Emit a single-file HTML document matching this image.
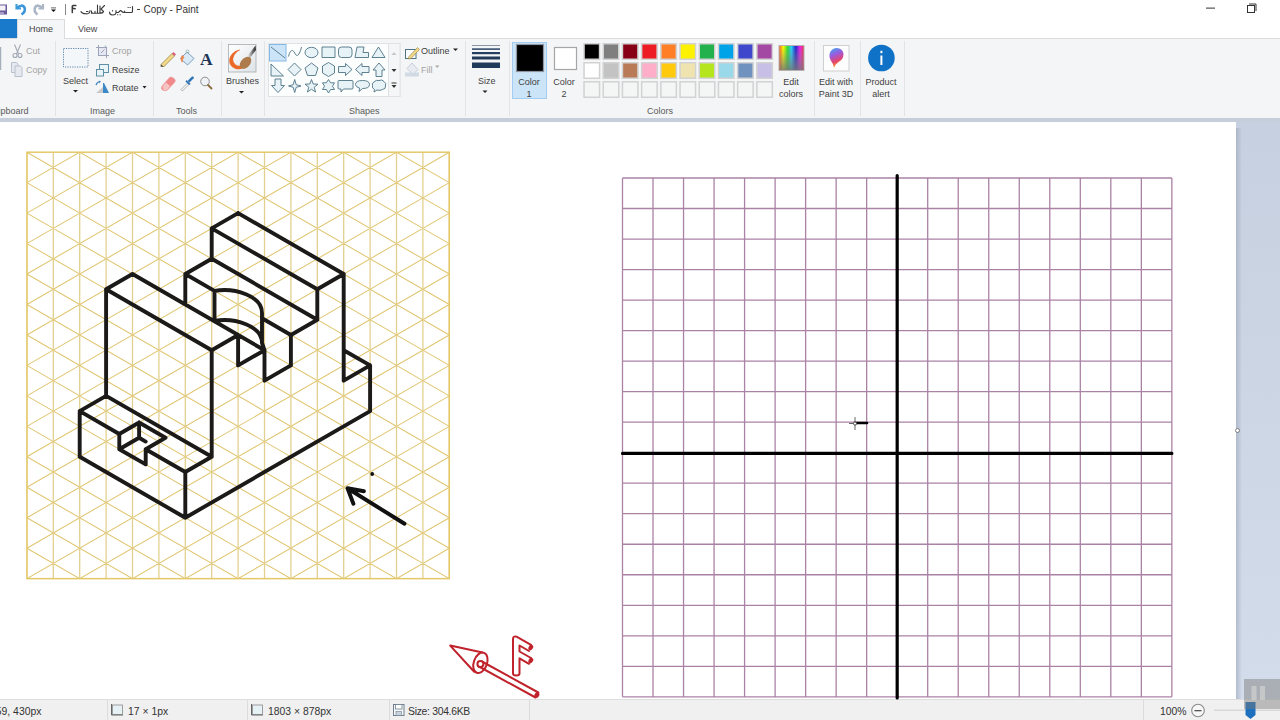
<!DOCTYPE html>
<html><head><meta charset="utf-8">
<style>
*{margin:0;padding:0;box-sizing:border-box}
html,body{width:1280px;height:720px;overflow:hidden;background:#fff;font-family:"Liberation Sans",sans-serif;color:#444}
.a{position:absolute}
.t{position:absolute;font-size:9px;line-height:10px;white-space:nowrap;color:#3f3f3f}
.c{text-align:center}
.g{color:#a3a3a3}
.sep{position:absolute;top:41px;width:1px;height:75px;background:#e3e4e5}
.st{position:absolute;top:706px;font-size:10.4px;line-height:11px;white-space:nowrap;color:#333}
svg{position:absolute;left:0;top:0}
</style></head><body>
<!-- title bar -->
<div class="a" style="left:0;top:0;width:1280px;height:19px;background:#fff"></div>
<!-- tabs row -->
<div class="a" style="left:0;top:19px;width:17px;height:19px;background:#1979ca"></div>
<div class="a" style="left:17px;top:19px;width:48px;height:20px;background:#f5f6f7;border:1px solid #dadbdc;border-bottom:none"></div>
<div class="t" style="left:29px;top:24px;color:#444">Home</div>
<div class="t" style="left:78px;top:24px;color:#444">View</div>
<!-- ribbon -->
<div class="a" style="left:0;top:38px;width:1280px;height:1px;background:#dadbdc"></div>
<div class="a" style="left:0;top:39px;width:1280px;height:79px;background:#f4f5f6"></div>
<div class="a" style="left:17px;top:38px;width:47px;height:2px;background:#f5f6f7"></div>
<div class="a" style="left:0;top:118px;width:1280px;height:4px;background:#c6cedb"></div>
<!-- workspace -->
<div class="a" style="left:0;top:122px;width:1280px;height:577px;background:linear-gradient(180deg,#c6d0e0,#d3dcea)"></div>
<div class="a" style="left:1236px;top:128px;width:6px;height:571px;background:linear-gradient(90deg,rgba(150,162,180,.55),rgba(150,162,180,0))"></div>
<div class="a" style="left:0;top:122px;width:1236px;height:577px;background:#fff"></div>
<!-- status bar -->
<div class="a" style="left:0;top:699px;width:1280px;height:21px;background:#f0f0f0;border-top:1px solid #dedede"></div>
<svg width="1280" height="720" viewBox="0 0 1280 720">
<defs><clipPath id="ic"><rect x="26.90" y="152.20" width="422.40" height="426.44"/></clipPath></defs>
<g clip-path="url(#ic)"><path d="M26.90 -91.48L449.30 152.20M26.90 -61.02L449.30 182.66M26.90 -30.56L449.30 213.12M26.90 -0.10L449.30 243.58M26.90 30.36L449.30 274.04M26.90 60.82L449.30 304.50M26.90 91.28L449.30 334.96M26.90 121.74L449.30 365.42M26.90 152.20L449.30 395.88M26.90 182.66L449.30 426.34M26.90 213.12L449.30 456.80M26.90 243.58L449.30 487.26M26.90 274.04L449.30 517.72M26.90 304.50L449.30 548.18M26.90 334.96L449.30 578.64M26.90 365.42L449.30 609.10M26.90 395.88L449.30 639.56M26.90 426.34L449.30 670.02M26.90 456.80L449.30 700.48M26.90 487.26L449.30 730.94M26.90 517.72L449.30 761.40M26.90 548.18L449.30 791.86M26.90 578.64L449.30 822.32M26.90 152.20L449.30 -91.48M26.90 182.66L449.30 -61.02M26.90 213.12L449.30 -30.56M26.90 243.58L449.30 -0.10M26.90 274.04L449.30 30.36M26.90 304.50L449.30 60.82M26.90 334.96L449.30 91.28M26.90 365.42L449.30 121.74M26.90 395.88L449.30 152.20M26.90 426.34L449.30 182.66M26.90 456.80L449.30 213.12M26.90 487.26L449.30 243.58M26.90 517.72L449.30 274.04M26.90 548.18L449.30 304.50M26.90 578.64L449.30 334.96M26.90 609.10L449.30 365.42M26.90 639.56L449.30 395.88M26.90 670.02L449.30 426.34M26.90 700.48L449.30 456.80M26.90 730.94L449.30 487.26M26.90 761.40L449.30 517.72M26.90 791.86L449.30 548.18M26.90 822.32L449.30 578.64" fill="none" stroke="#e0c672" stroke-width="1.05"/><path d="M26.90 152.20V578.64M53.30 152.20V578.64M79.70 152.20V578.64M106.10 152.20V578.64M132.50 152.20V578.64M158.90 152.20V578.64M185.30 152.20V578.64M211.70 152.20V578.64M238.10 152.20V578.64M264.50 152.20V578.64M290.90 152.20V578.64M317.30 152.20V578.64M343.70 152.20V578.64M370.10 152.20V578.64M396.50 152.20V578.64M422.90 152.20V578.64M449.30 152.20V578.64" fill="none" stroke="#e3d08f" stroke-width="1.3"/></g>
<rect x="26.90" y="152.20" width="422.40" height="426.44" fill="none" stroke="#e4c868" stroke-width="1.5"/>
<path d="M211.70 228.35L238.10 213.12M238.10 213.12L343.70 274.04M343.70 274.04L317.30 289.27M211.70 228.35L317.30 289.27M211.70 228.35L211.70 258.81M317.30 289.27L317.30 319.73M211.70 258.81L317.30 319.73M343.70 274.04L343.70 380.65M185.30 274.04L211.70 258.81M317.30 319.73L290.90 334.96M185.30 274.04L185.30 304.50M290.90 334.96L290.90 365.42M290.90 365.42L264.50 380.65M264.50 350.19L264.50 380.65M238.10 334.96L238.10 365.42M238.10 365.42L264.50 350.19M106.10 289.27L132.50 274.04M132.50 274.04L264.50 350.19M106.10 289.27L211.70 350.19M211.70 350.19L238.10 334.96M106.10 289.27L106.10 395.88M211.70 350.19L211.70 456.80M106.10 395.88L79.70 411.11M106.10 395.88L211.70 456.80M79.70 411.11L79.70 456.80M79.70 456.80L185.30 517.72M211.70 456.80L185.30 472.03M185.30 472.03L185.30 517.72M79.70 411.11L119.30 433.95M145.70 449.19L185.30 472.03M119.30 433.95L139.10 422.53M139.10 422.53L165.50 437.76M165.50 437.76L145.70 449.19M139.10 422.53L139.10 437.76M119.30 433.95L119.30 449.19M119.30 449.19L145.70 464.42M145.70 464.42L145.70 449.19M119.30 449.19L139.10 437.76M139.10 437.76L145.70 441.57M185.30 517.72L370.10 411.11M370.10 365.42L370.10 411.11M343.70 350.19L370.10 365.42M370.10 365.42L343.70 380.65M185.30 274.04L214.50 290.89M262.00 318.29L290.90 334.96M214.50 290.89C235.00 287.39 262.00 296.00 262.00 313.00M214.50 290.89V320.89M214.50 320.89C235.00 317.39 262.00 326.00 262.00 343.00M262.00 313.00L262.00 343.00L264.50 350.19" fill="none" stroke="#1c1a19" stroke-width="3.9" stroke-linecap="round" stroke-linejoin="round"/>
<path d="M404.5 523.75L347.8 488.5M363.9 491.25L347.5 488.2L353.4 503.75" fill="none" stroke="#111" stroke-width="3.9" stroke-linecap="round" stroke-linejoin="round"/>
<circle cx="372.2" cy="474" r="1.9" fill="#111"/>
<g fill="none" stroke="#c0232b" stroke-width="2" stroke-linejoin="round" stroke-linecap="round">
<path d="M450.2 645.6L482.5 652.6M450.2 645.6L474.2 671.7"/>
<ellipse cx="480.4" cy="662.8" rx="6.6" ry="10.6" transform="rotate(20 480.4 662.8)"/>
<path d="M478.9 666.5L535.5 697.5M481.9 661.5L538.3 692.5"/>
<circle cx="480.4" cy="664" r="3.0" fill="#fff"/>
<path d="M513 673.5V639Q513 635.8 516.5 636.6L531 644.8M529 651L519.5 645.5V651.5L531 658M529 663.8L519.5 658.3V673.5Q519.5 675.5 516.25 675.5Q513 675.5 513 673.5"/>
</g>
<ellipse cx="530.8" cy="647.5" rx="2.2" ry="3" fill="#c0232b" transform="rotate(30 530.8 647.5)"/>
<ellipse cx="530.8" cy="660.5" rx="2.2" ry="3" fill="#c0232b" transform="rotate(30 530.8 660.5)"/>
<ellipse cx="536.9" cy="695" rx="2.3" ry="3" fill="#c0232b" transform="rotate(30 536.9 695)"/>
<path d="M622.50 178.00V696.84M653.02 178.00V696.84M683.54 178.00V696.84M714.06 178.00V696.84M744.58 178.00V696.84M775.10 178.00V696.84M805.62 178.00V696.84M836.14 178.00V696.84M866.66 178.00V696.84M897.18 178.00V696.84M927.70 178.00V696.84M958.22 178.00V696.84M988.74 178.00V696.84M1019.26 178.00V696.84M1049.78 178.00V696.84M1080.30 178.00V696.84M1110.82 178.00V696.84M1141.34 178.00V696.84M1171.86 178.00V696.84M622.50 178.00H1171.86M622.50 208.52H1171.86M622.50 239.04H1171.86M622.50 269.56H1171.86M622.50 300.08H1171.86M622.50 330.60H1171.86M622.50 361.12H1171.86M622.50 391.64H1171.86M622.50 422.16H1171.86M622.50 452.68H1171.86M622.50 483.20H1171.86M622.50 513.72H1171.86M622.50 544.24H1171.86M622.50 574.76H1171.86M622.50 605.28H1171.86M622.50 635.80H1171.86M622.50 666.32H1171.86M622.50 696.84H1171.86" fill="none" stroke="#aa82a5" stroke-width="1.3"/>
<path d="M897.18 175.5V698M622.50 453.4H1171.86" fill="none" stroke="#000" stroke-width="3.2" stroke-linecap="round"/>
<path d="M849 423.5H861M855 417V430" stroke="#555" stroke-width="0.9"/>
<path d="M856 423H867" stroke="#000" stroke-width="2.6" stroke-linecap="round"/>
<circle cx="855" cy="423.5" r="1.6" fill="#fff" stroke="#333" stroke-width="0.8"/>
<circle cx="1237.5" cy="430.5" r="2" fill="#fff" stroke="#666" stroke-width="0.8"/>
</svg>
<div class="t" style="left:143.5px;top:3.5px;font-size:10px;line-height:11px;color:#333">Copy - Paint</div>
<div class="a" style="left:136.5px;top:9px;width:3.5px;height:1px;background:#444"></div>
<!-- separators -->
<div class="sep" style="left:55px"></div>
<div class="sep" style="left:153px"></div>
<div class="sep" style="left:221px"></div>
<div class="sep" style="left:264px"></div>
<div class="sep" style="left:465px"></div>
<div class="sep" style="left:509px"></div>
<div class="sep" style="left:814px"></div>
<div class="sep" style="left:860px"></div>
<div class="sep" style="left:904px"></div>
<!-- clipboard -->
<div class="t g" style="left:26px;top:46px">Cut</div>
<div class="t g" style="left:26px;top:64.5px">Copy</div>
<div class="t" style="left:-10px;top:105.5px;color:#5a5a5a">Clipboard</div>
<!-- image -->
<div class="t" style="left:63px;top:76px">Select</div>
<div class="t g" style="left:112px;top:46px">Crop</div>
<div class="t" style="left:112px;top:65px">Resize</div>
<div class="t" style="left:112px;top:82.5px">Rotate</div>
<div class="t" style="left:90px;top:105.5px;color:#5a5a5a">Image</div>
<!-- tools -->
<div class="t" style="left:176px;top:105.5px;color:#5a5a5a">Tools</div>
<div class="t" style="left:226px;top:76px">Brushes</div>
<!-- shapes -->
<div class="t" style="left:421px;top:46px">Outline</div>
<div class="t g" style="left:421px;top:64.5px">Fill</div>
<div class="t" style="left:349px;top:105.5px;color:#5a5a5a">Shapes</div>
<!-- size -->
<div class="t" style="left:478px;top:76px">Size</div>
<!-- colors -->
<div class="a" style="left:512px;top:42px;width:35px;height:57px;background:#cce4f7;border:1px solid #a3cdf0"></div>
<div class="t c" style="left:509px;top:75.5px;width:40px;line-height:12px">Color<br>1</div>
<div class="t c" style="left:544px;top:75.5px;width:40px;line-height:12px">Color<br>2</div>
<div class="t c" style="left:771px;top:75.5px;width:40px;line-height:12px">Edit<br>colors</div>
<div class="t" style="left:647px;top:105.5px;color:#5a5a5a">Colors</div>
<div class="t c" style="left:816px;top:75.5px;width:40px;line-height:12px">Edit with<br>Paint 3D</div>
<div class="t c" style="left:861px;top:75.5px;width:40px;line-height:12px">Product<br>alert</div>
<!-- status -->
<div class="st" style="left:-10px">459, 430px</div>
<div class="st" style="left:128px">17 × 1px</div>
<div class="st" style="left:268px">1803 × 878px</div>
<div class="st" style="left:408px;letter-spacing:-0.3px">Size: 304.6KB</div>
<div class="st" style="left:1160px">100%</div>
<div class="a" style="left:107px;top:700px;width:1px;height:20px;background:#dcdcdc"></div>
<div class="a" style="left:247px;top:700px;width:1px;height:20px;background:#dcdcdc"></div>
<div class="a" style="left:389px;top:700px;width:1px;height:20px;background:#dcdcdc"></div>
<div class="a" style="left:529px;top:700px;width:1px;height:20px;background:#dcdcdc"></div>
<div class="a" style="left:1143px;top:700px;width:1px;height:20px;background:#dcdcdc"></div>
<svg width="1280" height="720" viewBox="0 0 1280 720"><rect x="584.05" y="43.75" width="15.5" height="15.5" fill="#000000" stroke="#d2d2d2" stroke-width="1.5"/>
<rect x="603.25" y="43.75" width="15.5" height="15.5" fill="#7f7f7f" stroke="#d2d2d2" stroke-width="1.5"/>
<rect x="622.45" y="43.75" width="15.5" height="15.5" fill="#880015" stroke="#d2d2d2" stroke-width="1.5"/>
<rect x="641.65" y="43.75" width="15.5" height="15.5" fill="#ed1c24" stroke="#d2d2d2" stroke-width="1.5"/>
<rect x="660.85" y="43.75" width="15.5" height="15.5" fill="#ff7f27" stroke="#d2d2d2" stroke-width="1.5"/>
<rect x="680.05" y="43.75" width="15.5" height="15.5" fill="#fff200" stroke="#d2d2d2" stroke-width="1.5"/>
<rect x="699.25" y="43.75" width="15.5" height="15.5" fill="#22b14c" stroke="#d2d2d2" stroke-width="1.5"/>
<rect x="718.45" y="43.75" width="15.5" height="15.5" fill="#00a2e8" stroke="#d2d2d2" stroke-width="1.5"/>
<rect x="737.65" y="43.75" width="15.5" height="15.5" fill="#3f48cc" stroke="#d2d2d2" stroke-width="1.5"/>
<rect x="756.85" y="43.75" width="15.5" height="15.5" fill="#a349a4" stroke="#d2d2d2" stroke-width="1.5"/>
<rect x="584.05" y="62.75" width="15.5" height="15.5" fill="#ffffff" stroke="#d2d2d2" stroke-width="1.5"/>
<rect x="603.25" y="62.75" width="15.5" height="15.5" fill="#c3c3c3" stroke="#d2d2d2" stroke-width="1.5"/>
<rect x="622.45" y="62.75" width="15.5" height="15.5" fill="#b97a57" stroke="#d2d2d2" stroke-width="1.5"/>
<rect x="641.65" y="62.75" width="15.5" height="15.5" fill="#ffaec9" stroke="#d2d2d2" stroke-width="1.5"/>
<rect x="660.85" y="62.75" width="15.5" height="15.5" fill="#ffc90e" stroke="#d2d2d2" stroke-width="1.5"/>
<rect x="680.05" y="62.75" width="15.5" height="15.5" fill="#efe4b0" stroke="#d2d2d2" stroke-width="1.5"/>
<rect x="699.25" y="62.75" width="15.5" height="15.5" fill="#b5e61d" stroke="#d2d2d2" stroke-width="1.5"/>
<rect x="718.45" y="62.75" width="15.5" height="15.5" fill="#99d9ea" stroke="#d2d2d2" stroke-width="1.5"/>
<rect x="737.65" y="62.75" width="15.5" height="15.5" fill="#7092be" stroke="#d2d2d2" stroke-width="1.5"/>
<rect x="756.85" y="62.75" width="15.5" height="15.5" fill="#c8bfe7" stroke="#d2d2d2" stroke-width="1.5"/>
<rect x="584.05" y="81.75" width="15.5" height="15.5" fill="#f4f5f5" stroke="#d2d2d2" stroke-width="1.5"/>
<rect x="603.25" y="81.75" width="15.5" height="15.5" fill="#f4f5f5" stroke="#d2d2d2" stroke-width="1.5"/>
<rect x="622.45" y="81.75" width="15.5" height="15.5" fill="#f4f5f5" stroke="#d2d2d2" stroke-width="1.5"/>
<rect x="641.65" y="81.75" width="15.5" height="15.5" fill="#f4f5f5" stroke="#d2d2d2" stroke-width="1.5"/>
<rect x="660.85" y="81.75" width="15.5" height="15.5" fill="#f4f5f5" stroke="#d2d2d2" stroke-width="1.5"/>
<rect x="680.05" y="81.75" width="15.5" height="15.5" fill="#f4f5f5" stroke="#d2d2d2" stroke-width="1.5"/>
<rect x="699.25" y="81.75" width="15.5" height="15.5" fill="#f4f5f5" stroke="#d2d2d2" stroke-width="1.5"/>
<rect x="718.45" y="81.75" width="15.5" height="15.5" fill="#f4f5f5" stroke="#d2d2d2" stroke-width="1.5"/>
<rect x="737.65" y="81.75" width="15.5" height="15.5" fill="#f4f5f5" stroke="#d2d2d2" stroke-width="1.5"/>
<rect x="756.85" y="81.75" width="15.5" height="15.5" fill="#f4f5f5" stroke="#d2d2d2" stroke-width="1.5"/><!-- quick access -->
<g>
<rect x="-2" y="4.5" width="9" height="10" fill="#6b5a9a"/>
<rect x="-1" y="5.5" width="6.5" height="5" fill="#f4f2f8"/>
<rect x="0" y="12" width="4" height="2" fill="#a89cc8"/>
<path d="M16.5 4 L16.5 8.5 L21 8.5" fill="none" stroke="#3f9fdf" stroke-width="2.2"/>
<path d="M16.8 8.2 Q22 3.5 24.5 7.5 Q26 11.5 21.5 14.5" fill="none" stroke="#3a96d8" stroke-width="2.6"/>
<path d="M43 4 L43 8.5 L38.5 8.5" fill="none" stroke="#aab6c6" stroke-width="2.2"/>
<path d="M42.7 8.2 Q37.5 3.5 35 7.5 Q33.5 11.5 37.5 14.5" fill="none" stroke="#aab6c6" stroke-width="2.6"/>
<rect x="51" y="7.2" width="5" height="1.3" fill="#8a8a8a"/>
<path d="M51 9.6 L56 9.6 L53.5 12 Z" fill="#111"/>
<rect x="65" y="4" width="1" height="11" fill="#888"/>
</g>
<!-- arabic title approx -->
<g fill="none" stroke="#3a3a3a" stroke-width="1.1" stroke-linecap="round">
<path d="M75.8 5.6 L73.2 5.4 Q72 5.6 72.2 7.2 Q72.5 8.8 75.2 8.8 M72.3 6.8 L72.3 12.6" stroke-width="1.5"/>
<path d="M104.5 5.5 L101 9 L103.5 11.5 Q103 13.3 99 13.3 L93 13.3 Q91 13 91.5 11 M91.5 11 L91.5 13.3 M95 11.3 L95 13.2 M97.5 5 L97.5 13.2 M100 6 L100 12.5"/>
<path d="M90 10.5 Q90 14.2 86 13.8 Q81.5 13.5 81 11.5 M88 11.5 L86.5 11.5"/>
<path d="M132.5 6.5 L132.5 11.5 Q132.5 12.5 131 12.5 L126 12.5 Q124.5 12.5 124.5 11 M124.5 12.5 Q122 12.5 121.5 11 Q120.5 10 119.5 11.5 L118.5 12.5 L116 12.5 L116 10.5 M116 12.5 Q116 15 112.5 15 Q109.5 15 109.5 12 M112.5 10.5 L112.5 11"/>
<path d="M128 7.5 L128.3 7.5 M130 7.5 L130.3 7.5 M117.5 14.8 L117.8 14.8 M120 14.8 L120.3 14.8"/>
</g>
<!-- window controls -->
<rect x="1206" y="7.6" width="9" height="1" fill="#333"/>
<rect x="1247.5" y="5.5" width="7" height="7" fill="none" stroke="#333" stroke-width="1"/>
<path d="M1249 4 L1256 4 L1256 11" fill="none" stroke="#333" stroke-width="1"/>
<!-- clipboard -->
<rect x="0" y="47" width="1.2" height="23" fill="#a3aebb"/>
<g fill="none" stroke="#a2a9b4" stroke-width="1.1">
<path d="M14.5 44.5 L18.5 54 M20.5 44.5 L16.5 54"/>
<circle cx="15" cy="55.5" r="2"/><circle cx="20" cy="55.5" r="2"/>
</g>
<g fill="#e6e9ef" stroke="#b3bbc8" stroke-width="0.9">
<path d="M11.5 62.5 L16.5 62.5 L18 64 L18 72.5 L11.5 72.5 Z"/>
<path d="M15 66 L20.5 66 L22 67.5 L22 76.5 L15 76.5 Z"/>
</g>
<!-- image group -->
<rect x="63.5" y="48.5" width="24.5" height="18.5" fill="#f4f7fa" stroke="#5f86ad" stroke-width="1" stroke-dasharray="1.2 1.2"/>
<path d="M73 90 L78 90 L75.5 92.5 Z" fill="#222"/>
<g fill="none" stroke="#9ba4ba" stroke-width="1">
<rect x="98.5" y="47.5" width="8" height="8" fill="#e5e8f3"/>
<path d="M96 47.5 L100 47.5 M98.5 45 L98.5 47.5 M106.5 55.5 L106.5 58 M104.5 55.5 L109 55.5 M101 53 L104.5 49.5 M105 45.5 L106.5 47.5"/>
</g>
<g stroke="#5f8fa6" stroke-width="1">
<rect x="99.5" y="64.5" width="9" height="8" fill="#e9f4f6"/>
<rect x="96.5" y="69.5" width="7" height="6.5" fill="#e9f4f6"/>
</g>
<path d="M96 85 Q97 82 100 81.5" fill="none" stroke="#3a7fb8" stroke-width="1.2"/>
<path d="M99 80.5 L101 81.8 L99.3 83.2 Z" fill="#3a7fb8"/>
<path d="M96 93 L103 93 L103 87 Z" fill="#c9c9c9"/>
<path d="M103 93 L109 93 L104 83 L103 83 Z" fill="#3a88c8"/>
<path d="M142.5 86 L146.5 86 L144.5 88.5 Z" fill="#222"/>
<!-- tools -->
<g>
<path d="M161 64.5 L172 53.5 L174.5 56 L163.5 67 Z" fill="#f2d98a" stroke="#8c7a3a" stroke-width="0.7"/>
<path d="M172 53.5 L173.5 52 L176 54.5 L174.5 56 Z" fill="#d65a7a"/>
<path d="M161 64.5 L160.5 66.5 L163.5 67 Z" fill="#333"/>
</g>
<g>
<path d="M187 52 L194 58.5 L187.5 65 L180.5 58.5 Z" fill="#dbeaf7" stroke="#6d95b8" stroke-width="0.9"/>
<path d="M182.5 55 Q180 57 180.8 60 Q181.5 63 182.8 62.5 Q182 59 184.5 57.5 Z" fill="#ea8a50"/>
<circle cx="187.5" cy="51.5" r="1.5" fill="none" stroke="#8aa" stroke-width="0.7"/>
</g>
<text x="200" y="64.6" font-family="Liberation Serif" font-weight="bold" font-size="17.5" fill="#1d3557">A</text>
<g>
<path d="M162 86 L169.5 77.5 Q171 76.5 173 77.8 L175 79.5 Q176 81 174.5 82.5 L167 90.5 L163 90.5 Q160.5 88.5 162 86 Z" fill="#f1888a" stroke="#e8a0a0" stroke-width="0.6"/>
<path d="M162.5 86.5 L166 82.5 L170 86 L167 90 L163.5 90 Z" fill="#f7c4c4"/>
</g>
<g>
<path d="M181 89.5 L188.5 82 L190 83.5 L182.5 91 Z" fill="#f2f2f2" stroke="#8a8a8a" stroke-width="0.6"/>
<path d="M187.5 81 L192 76.5 Q194 76 194 78 L189.5 82.5 Z" fill="#2e74b5"/>
<path d="M186.5 80 L190.5 84 L189 85 L185.5 81.5 Z" fill="#2e74b5"/>
</g>
<g>
<circle cx="205" cy="81.5" r="4.3" fill="#eef3f8" stroke="#8d8d8d" stroke-width="1"/>
<path d="M208 85 L211.5 88.5" stroke="#8a6a3a" stroke-width="1.8" stroke-linecap="round"/>
</g>
<!-- brushes -->
<defs>
<linearGradient id="bg1" x1="0" y1="0" x2="1" y2="1"><stop offset="0" stop-color="#fff"/><stop offset="1" stop-color="#dde3e8"/></linearGradient>
<linearGradient id="ec" x1="0" y1="0" x2="1" y2="0"><stop offset="0" stop-color="#f52"/><stop offset="0.17" stop-color="#ff0"/><stop offset="0.34" stop-color="#3d3"/><stop offset="0.5" stop-color="#2cf"/><stop offset="0.67" stop-color="#22c"/><stop offset="0.84" stop-color="#e2e"/><stop offset="1" stop-color="#e34"/></linearGradient>
<linearGradient id="ecv" x1="0" y1="0" x2="0" y2="1"><stop offset="0" stop-color="#888" stop-opacity="0"/><stop offset="1" stop-color="#777" stop-opacity="0.85"/></linearGradient>
<linearGradient id="p3d" x1="0" y1="0" x2="0.3" y2="1"><stop offset="0" stop-color="#36b0f0"/><stop offset="0.4" stop-color="#9a5be0"/><stop offset="0.75" stop-color="#e8456a"/><stop offset="1" stop-color="#f7a531"/></linearGradient>
<linearGradient id="hnd" x1="0" y1="0" x2="1" y2="0"><stop offset="0" stop-color="#fff"/><stop offset="1" stop-color="#222"/></linearGradient>
</defs>
<rect x="228.5" y="44.5" width="27.5" height="27.5" fill="url(#bg1)" stroke="#a8acb0" stroke-width="0.8"/>
<path d="M255.5 45.5 L247 56.5 L249.5 58.5 L256 50 Z" fill="url(#hnd)"/>
<path d="M240 49.5 Q234.5 50.5 231.5 54.5 Q228.5 58.5 229.5 63 Q231 67.5 236 69 Q239.5 69.8 242.5 68.5 L242 65.5 Q238 66.5 235.5 64.5 Q233 62.5 233 59 Q233.5 55 236.5 52.5 Q238.5 50.8 240 50.3 Z" fill="#ec6a28"/>
<ellipse cx="245.5" cy="62.8" rx="7" ry="4.6" transform="rotate(-48 245.5 62.8)" fill="#ad7b4c"/>
<path d="M239 91 L244 91 L241.5 93.5 Z" fill="#222"/>
<!-- shapes gallery -->
<rect x="268.5" y="43.5" width="131.5" height="53" fill="#fcfdfd" stroke="#e0e3e6" stroke-width="1"/>
<rect x="388.5" y="43.5" width="11.5" height="53" fill="#f5f6f7" stroke="#e0e3e6" stroke-width="1"/>
<rect x="269.5" y="44.5" width="16.5" height="16.5" fill="#cce4f7" stroke="#86b8e6" stroke-width="1"/>
<g fill="#e8f3f8" stroke="#4e7485" stroke-width="0.9" stroke-linejoin="round">
<path d="M271 47 L285 58" fill="none"/>
<path d="M288.5 56.5 Q290 50 292.5 50.5 Q294.5 51.5 295.5 54.5 Q297 57 299 54 Q301 50 301.5 47" fill="none"/>
<ellipse cx="311.5" cy="52.5" rx="6.5" ry="5.2"/>
<rect x="322" y="47" width="13" height="10.5"/>
<rect x="338.5" y="47" width="13.5" height="10.5" rx="3"/>
<path d="M357 47 L364 47 L363 52.5 L368.5 52.5 L368.5 57.5 L355 57.5 Z"/>
<path d="M378.5 47 L385 57.5 L372 57.5 Z"/>
<path d="M271 64 L271 76 L283.5 76 Z"/>
<path d="M294.5 63 L301 69.5 L294.5 76 L288 69.5 Z"/>
<path d="M311.5 63 L318 68 L315.5 75.5 L307.5 75.5 L305 68 Z"/>
<path d="M328.5 62.5 L334.5 66 L334.5 73 L328.5 76.5 L322.5 73 L322.5 66 Z"/>
<path d="M338.5 66.5 L345.5 66.5 L345.5 63.5 L352 69.5 L345.5 75.5 L345.5 72.5 L338.5 72.5 Z"/>
<path d="M369 66.5 L362 66.5 L362 63.5 L355.5 69.5 L362 75.5 L362 72.5 L369 72.5 Z"/>
<path d="M376 76.5 L376 70 L373 70 L379 63 L385 70 L382 70 L382 76.5 Z"/>
<path d="M275 79 L281 79 L281 85.5 L284.5 85.5 L278 92.5 L271.5 85.5 L275 85.5 Z"/>
<path d="M294.7 79.5 L296.2 84.7 L301 86 L296.2 87.3 L294.7 92.5 L293.2 87.3 L288.5 86 L293.2 84.7 Z"/>
<path d="M311.5 79.5 L313.2 84 L318 84.2 L314.2 87.2 L315.6 92 L311.5 89.3 L307.4 92 L308.8 87.2 L305 84.2 L309.8 84 Z"/>
<path d="M328.5 79.5 L330.6 82.8 L334.5 82.8 L332.5 86.2 L334.5 89.5 L330.6 89.5 L328.5 93 L326.4 89.5 L322.5 89.5 L324.5 86.2 L322.5 82.8 L326.4 82.8 Z"/>
<path d="M339 80.5 L352 80.5 Q353 80.5 353 81.5 L353 88 Q353 89 352 89 L343.5 89 L341 92 L341 89 L339 89 Q338 89 338 88 L338 81.5 Q338 80.5 339 80.5 Z"/>
<path d="M362.5 80.5 Q369.5 80.5 369.5 84.5 Q369.5 88.5 362.5 88.5 L359 91.5 L359.5 88 Q355.5 87 355.5 84.5 Q355.5 80.5 362.5 80.5 Z"/>
<path d="M374 82 Q376 79.5 379 80.5 Q382 79 384 81.5 Q386.5 83 385.5 86 Q386 89 382.5 89.5 Q380 91 377 90 L374 92 L374.5 89.5 Q371.5 88 372.5 85.5 Q371.5 83 374 82 Z"/>
</g>
<path d="M391.5 55 L396.5 55 L394 52 Z" fill="#c8c8c8"/>
<path d="M391.5 69 L396.5 69 L394 72 Z" fill="#333"/>
<rect x="391.5" y="82.5" width="5" height="1" fill="#333"/>
<path d="M391.5 85 L396.5 85 L394 88 Z" fill="#333"/>
<!-- outline / fill -->
<rect x="405.5" y="49.5" width="10.5" height="9" fill="#fbfdfd" stroke="#4e7485" stroke-width="1"/>
<path d="M409 56.5 L417.5 47.5 L419.5 49.5 L411 58.5 L408.5 59 Z" fill="#f2d98a" stroke="#8c7a3a" stroke-width="0.6"/>
<path d="M453 48.5 L458 48.5 L455.5 51 Z" fill="#222"/>
<g opacity="0.55">
<rect x="405" y="72.5" width="14" height="4" fill="#b8c4d4"/>
<path d="M412 63 L418 69.5 L413 74.5 L407 68.5 Z" fill="#dfe6ef" stroke="#9fb0c4" stroke-width="1"/>
</g>
<path d="M435 65.5 L439.5 65.5 L437.2 68 Z" fill="#aaa"/>
<!-- size -->
<rect x="472" y="45" width="28" height="1" fill="#8c96a3"/>
<rect x="472" y="48.3" width="28" height="1.6" fill="#374e6d"/>
<rect x="472" y="52" width="28" height="2.2" fill="#253f60"/>
<rect x="472" y="56.5" width="28" height="3" fill="#213a5a"/>
<rect x="472" y="62.5" width="28" height="5.5" fill="#1f3a5a"/>
<path d="M482.5 90.5 L487.5 90.5 L485 93 Z" fill="#222"/>
<!-- color1 / color2 -->
<rect x="516.5" y="44.5" width="27" height="27" fill="#000" stroke="#8d96a0" stroke-width="1.2"/>
<rect x="554.5" y="47.5" width="22" height="22" fill="#fff" stroke="#a6a6a6" stroke-width="1.2"/>
<!-- edit colors -->
<rect x="779" y="45.5" width="25" height="25" fill="url(#ec)" stroke="#b9b0b0" stroke-width="1"/>
<rect x="779.5" y="46" width="24" height="24" fill="url(#ecv)"/>
<!-- paint 3d -->
<rect x="823.5" y="45.5" width="25.5" height="25.5" fill="#fdfdfd" stroke="#cfcfcf" stroke-width="1"/>
<path d="M834 68 Q833 63 830.5 60 Q829 57.5 829.5 54.5 Q831 48 836.5 48 Q843 48 843.5 54.5 Q843.5 59 838.5 62 Q835.5 64 834 68 Z" fill="url(#p3d)"/>
<!-- product alert -->
<circle cx="881.4" cy="58" r="13.3" fill="#0f72c6"/>
<rect x="880.4" y="55.5" width="2" height="9.5" fill="#fff"/>
<rect x="880.4" y="50.8" width="2" height="2.4" fill="#fff"/>
<!-- status bar icons -->
<g fill="#e6f1f6" stroke="#8a8a8a" stroke-width="0.8">
<rect x="112.5" y="705" width="10" height="9.5"/>
<rect x="252.5" y="705" width="10" height="9.5"/>
</g>
<path d="M111.5 704 L111.5 715 L123 715" fill="none" stroke="#666" stroke-width="1"/>
<path d="M251.5 704 L251.5 715 L263 715" fill="none" stroke="#666" stroke-width="1"/>
<rect x="393.5" y="704.5" width="10.5" height="11" fill="#f6f8fa" stroke="#6f7f8f" stroke-width="1"/>
<rect x="395.5" y="704.5" width="6.5" height="4.5" fill="#fff" stroke="#6f7f8f" stroke-width="0.8"/>
<rect x="396" y="711.5" width="5.5" height="4" fill="#c9d3dd" stroke="#6f7f8f" stroke-width="0.6"/>
<circle cx="1198" cy="710.5" r="6.3" fill="#f7f7f7" stroke="#8a8a8a" stroke-width="1.1"/>
<rect x="1194.5" y="710" width="7" height="1.3" fill="#555"/>
<rect x="1214" y="709.5" width="66" height="1.5" fill="#d8d8d8"/>
<path d="M1245.5 702 L1255.5 702 L1255.5 715 L1250.5 719 L1245.5 715 Z" fill="#1f6fbf"/>
<!-- video overlay pause -->
<rect x="1244" y="679" width="36" height="30" fill="#777" opacity="0.45"/>
<rect x="1251.5" y="686" width="5" height="14" fill="#cfcfcf" opacity="0.75"/>
<rect x="1260" y="686" width="5" height="14" fill="#cfcfcf" opacity="0.75"/>
</svg>
</body></html>
